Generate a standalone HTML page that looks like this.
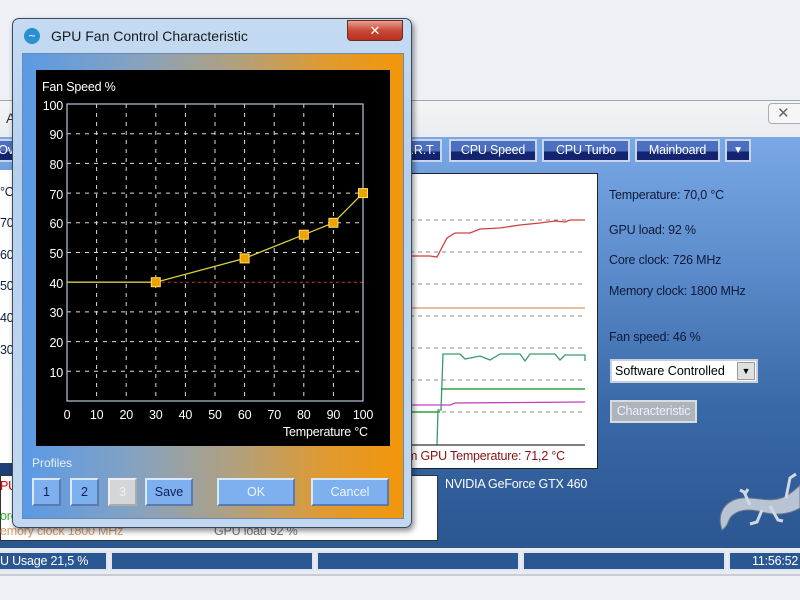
<!DOCTYPE html>
<html><head><meta charset="utf-8"><style>
*{margin:0;padding:0;box-sizing:border-box}
body{width:800px;height:600px;overflow:hidden;position:relative;background:#eef0f5;font-family:"Liberation Sans","DejaVu Sans",sans-serif;}
.abs{position:absolute}
.tab{position:absolute;top:139px;height:23px;border:2px solid #c9d6ea;background:linear-gradient(#4c6fc0 0,#4c6fc0 55%,#14236e 55%,#14236e 100%);color:#fff;font-size:12.5px;letter-spacing:-0.2px;text-align:center;line-height:19px}
.t{position:absolute;font-size:12.5px;letter-spacing:-0.2px;color:#0d1a3a;white-space:nowrap}
.btn{position:absolute;top:478px;height:28px;background:#7eb0ef;border:2px solid;border-color:#d8e8ff #5a7ab0 #5a7ab0 #d8e8ff;font-size:12.5px;text-align:center;line-height:24px;color:#102050}
.sb{position:absolute;top:551px;height:20px;background:#2a5692;border:2px solid #dfe6f0;color:#fff;font-size:12.5px;letter-spacing:-0.2px;line-height:16px;padding-left:2px}
</style></head><body>
<div class="abs" style="left:0;top:100px;width:800px;height:40px;background:linear-gradient(#f4f5f7,#e9ebee);border-top:1px solid #9aa"></div>
<div class="abs" style="left:6px;top:110px;font-size:14px;color:#333">A</div>
<div class="abs" style="left:768px;top:103px;width:40px;height:21px;border:1px solid #aab;border-radius:4px;background:#f6f6f6;font-size:15px;color:#666;padding-left:8px">✕</div>
<div class="abs" style="left:0;top:137px;width:800px;height:413px;background:linear-gradient(#7aa8e6 0%,#5d8dcc 30%,#3a69a8 65%,#2a5690 100%)"></div>
<div class="tab" style="left:-4px;width:20px">Ov</div>
<div class="tab" style="left:404px;width:38px">.R.T.</div>
<div class="tab" style="left:449px;width:88px">CPU Speed</div>
<div class="tab" style="left:542px;width:88px">CPU Turbo</div>
<div class="tab" style="left:635px;width:85px">Mainboard</div>
<div class="tab" style="left:725px;width:26px;font-size:10px">▼</div>
<div class="abs" style="left:0;top:170px;width:16px;height:294px;background:#fff"></div>
<div class="abs" style="left:0;top:463px;width:20px;height:12px;background:#1d3f78"></div>
<div class="abs" style="left:0;top:475px;width:438px;height:66px;background:#fff;border:1px solid #333"></div>
<div class="t" style="left:0;top:479px;color:#d00">PU</div>
<div class="t" style="left:0;top:509px;color:#3a3">ore</div>
<div class="t" style="left:0;top:524px;color:#d96">emory clock  1800 MHz</div>
<div class="t" style="left:214px;top:524px;color:#777">GPU load  92 %</div>
<div class="t" style="left:0;top:185px">°C</div><div class="t" style="left:0;top:216px">70</div><div class="t" style="left:0;top:248px">60</div><div class="t" style="left:0;top:279px">50</div><div class="t" style="left:0;top:311px">40</div><div class="t" style="left:0;top:343px">30</div>
<div class="abs" style="left:406px;top:173px;width:192px;height:296px;background:#fff;border:1px solid #222"></div>
<svg class="abs" style="left:0;top:0" width="800" height="600">
<g stroke="#888" stroke-dasharray="4,4" stroke-width="1">
<line x1="410" y1="220" x2="585" y2="220"/><line x1="410" y1="252" x2="585" y2="252"/><line x1="410" y1="284" x2="585" y2="284"/><line x1="410" y1="316" x2="585" y2="316"/><line x1="410" y1="348" x2="585" y2="348"/><line x1="410" y1="380" x2="585" y2="380"/><line x1="410" y1="412" x2="585" y2="412"/>
</g>
<polyline fill="none" stroke="#d04040" stroke-width="1.3" points="410,256 430,256 437,257 447,238 455,233 470,233 480,229 500,228 520,225 540,223 555,221 565,222 570,220 585,220"/>
<line x1="410" y1="308" x2="585" y2="308" stroke="#e89060" stroke-width="1.3"/>
<polyline fill="none" stroke="#3a9a6a" stroke-width="1.3" points="437,445 438,410 441,410 443,354 460,354 465,359 480,356 490,360 500,354 520,354 525,361 530,354 555,354 560,360 565,355 585,355 585,361"/>
<line x1="441" y1="389" x2="585" y2="389" stroke="#30a040" stroke-width="1.5"/>
<line x1="410" y1="412" x2="440" y2="412" stroke="#30a040" stroke-width="1.5"/>
<polyline fill="none" stroke="#c040c0" stroke-width="1.3" points="410,405 450,405 455,403 585,402"/>
<line x1="410" y1="445" x2="585" y2="445" stroke="#333" stroke-width="1.3"/>
<g fill="#b8c4d4" stroke="#6a7890" stroke-width="1">
<path d="M722 530 C716 512 726 500 742 498 C756 497 770 503 784 497 C792 493 797 488 800 485 L800 508 C790 514 776 516 762 512 C748 508 736 510 730 518 C728 522 727 527 722 530 Z"/>
<path d="M750 505 L744 492 L740 490 M745 494 L748 489" fill="none" stroke="#d0d8e4" stroke-width="3"/>
<path d="M770 506 L778 520 L783 521" fill="none" stroke="#d0d8e4" stroke-width="3"/>
<path d="M786 498 L790 478 L796 474" fill="none" stroke="#d0d8e4" stroke-width="3"/>
<path d="M762 510 L757 522 L750 524" fill="none" stroke="#d0d8e4" stroke-width="3"/>
</g>
</svg>
<div class="t" style="left:407px;top:449px;color:#8a1010">m GPU Temperature: 71,2 °C</div>
<div class="t" style="left:609px;top:188px">Temperature: 70,0 °C</div>
<div class="t" style="left:609px;top:223px">GPU load: 92 %</div>
<div class="t" style="left:609px;top:253px">Core clock: 726 MHz</div>
<div class="t" style="left:609px;top:284px">Memory clock: 1800 MHz</div>
<div class="t" style="left:609px;top:330px">Fan speed: 46 %</div>
<div class="abs" style="left:610px;top:359px;width:148px;height:24px;background:#fff;border:2px solid #c8d0e0;font-size:12.5px;line-height:20px;padding-left:3px;color:#000">Software Controlled<span style="position:absolute;right:1px;top:1px;width:18px;height:18px;background:#e0e0e0;border:1px solid #999;font-size:9px;text-align:center;line-height:16px">▼</span></div>
<div class="abs" style="left:610px;top:400px;width:87px;height:23px;background:#aeb4bc;border:2px solid #d8dce0;color:#eef;font-size:12.5px;letter-spacing:-0.2px;line-height:19px;text-align:center">Characteristic</div>
<div class="t" style="left:445px;top:477px;color:#fff">NVIDIA GeForce GTX 460</div>
<div class="abs" style="left:0;top:548px;width:800px;height:26px;background:#e8ecf2"></div>
<div class="sb" style="left:-4px;width:112px">U Usage 21,5 %</div>
<div class="sb" style="left:110px;width:204px"></div>
<div class="sb" style="left:316px;width:204px"></div>
<div class="sb" style="left:522px;width:204px"></div>
<div class="sb" style="left:728px;width:80px;padding-left:22px">11:56:52</div>
<div class="abs" style="left:0;top:574px;width:800px;height:2px;background:#c8ccd4"></div>
<div class="abs" style="left:12px;top:18px;width:400px;height:510px;border-radius:7px;background:linear-gradient(#c4dbf2,#b6d0ec 30%,#c2d8f0);border:1px solid #3a4a5e;box-shadow:2px 3px 6px rgba(0,0,0,.45)"></div>
<div class="abs" style="left:347px;top:20px;width:56px;height:21px;border-radius:0 0 4px 4px;background:linear-gradient(#e8a090,#c84a36 50%,#b83020);border:1px solid #6a2a20;color:#fff;font-size:13px;text-align:center;line-height:19px;font-weight:bold">✕</div>
<div class="abs" style="left:24px;top:28px;width:16px;height:16px;border-radius:50%;background:#2a90d0;color:#fff;font-size:12px;line-height:16px;text-align:center">~</div>
<div class="abs" style="left:51px;top:28px;font-size:14px;color:#1a1a1a">GPU Fan Control Characteristic</div>
<div class="abs" style="left:22px;top:53px;width:382px;height:466px;background:linear-gradient(90deg,#5a9ae6 0%,#86a2c0 30%,#b0a080 55%,#e09a30 80%,#f3960a 100%);border:1px solid #6d88a8"></div>
<div class="abs" style="left:36px;top:70px;width:354px;height:376px;background:#000"></div>
<svg class="abs" style="left:0;top:0" width="420" height="460" font-family="Liberation Sans, sans-serif" font-size="12.5" fill="#fff" letter-spacing="-0.2">
<text x="42" y="91">Fan Speed %</text>
<g stroke="#ddd" stroke-dasharray="4,5" stroke-width="1">
<line x1="96.6" y1="104" x2="96.6" y2="401"/><line x1="126.2" y1="104" x2="126.2" y2="401"/><line x1="155.8" y1="104" x2="155.8" y2="401"/><line x1="185.4" y1="104" x2="185.4" y2="401"/><line x1="215" y1="104" x2="215" y2="401"/><line x1="244.6" y1="104" x2="244.6" y2="401"/><line x1="274.2" y1="104" x2="274.2" y2="401"/><line x1="303.8" y1="104" x2="303.8" y2="401"/><line x1="333.4" y1="104" x2="333.4" y2="401"/>
<line x1="67" y1="133.7" x2="363" y2="133.7"/><line x1="67" y1="163.4" x2="363" y2="163.4"/><line x1="67" y1="193.1" x2="363" y2="193.1"/><line x1="67" y1="222.8" x2="363" y2="222.8"/><line x1="67" y1="252.5" x2="363" y2="252.5"/><line x1="67" y1="311.9" x2="363" y2="311.9"/><line x1="67" y1="341.6" x2="363" y2="341.6"/><line x1="67" y1="371.3" x2="363" y2="371.3"/>
</g>
<line x1="155.8" y1="282.2" x2="363" y2="282.2" stroke="#c04020" stroke-dasharray="3,3"/>
<rect x="67" y="104" width="296" height="297" fill="none" stroke="#b8c8d8" stroke-width="1.2"/>
<polyline fill="none" stroke="#d8d040" stroke-width="1.3" points="67,282.2 155.8,282.2 244.6,258.4 303.8,234.7 333.4,222.8 363,193.1"/>
<g fill="#f0a000" stroke="#ffe060" stroke-width="1">
<rect x="151.3" y="277.7" width="9" height="9"/><rect x="240.1" y="253.9" width="9" height="9"/><rect x="299.3" y="230.2" width="9" height="9"/><rect x="328.9" y="218.3" width="9" height="9"/><rect x="358.5" y="188.6" width="9" height="9"/>
</g>
<g text-anchor="end">
<text x="63" y="110">100</text><text x="63" y="139">90</text><text x="63" y="169">80</text><text x="63" y="199">70</text><text x="63" y="228">60</text><text x="63" y="258">50</text><text x="63" y="288">40</text><text x="63" y="317">30</text><text x="63" y="347">20</text><text x="63" y="377">10</text>
</g>
<g text-anchor="middle">
<text x="67" y="419">0</text><text x="96.6" y="419">10</text><text x="126.2" y="419">20</text><text x="155.8" y="419">30</text><text x="185.4" y="419">40</text><text x="215" y="419">50</text><text x="244.6" y="419">60</text><text x="274.2" y="419">70</text><text x="303.8" y="419">80</text><text x="333.4" y="419">90</text><text x="363" y="419">100</text>
</g>
<text x="283" y="436">Temperature °C</text>
</svg>
<div class="abs" style="left:32px;top:456px;font-size:12px;color:#e8f0ff">Profiles</div>
<div class="btn" style="left:32px;width:29px">1</div>
<div class="btn" style="left:70px;width:29px">2</div>
<div class="btn" style="left:108px;width:29px;background:#d4d6d8;color:#f0f0f0;border-color:#eee #aaa #aaa #eee">3</div>
<div class="btn" style="left:145px;width:48px">Save</div>
<div class="btn" style="left:217px;width:78px;color:#eef4ff">OK</div>
<div class="btn" style="left:311px;width:78px;color:#eef4ff">Cancel</div>
</body></html>
